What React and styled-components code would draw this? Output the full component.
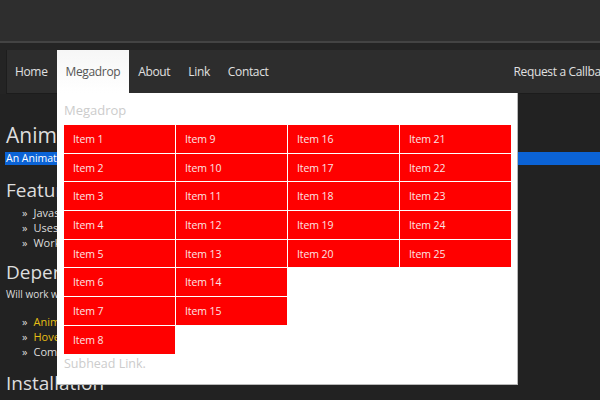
import React from 'react'
import styled, { createGlobalStyle } from 'styled-components'

const GlobalStyle = createGlobalStyle`
  html, body {
    margin: 0;
    padding: 0;
    background: #222222;
    overflow: hidden;
  }
  body {
    font-family: "Open Sans", "Liberation Sans", sans-serif;
  }
`

const Page = styled.div`
  position: relative;
  width: 600px;
  height: 400px;
  overflow: hidden;
  background: #222222;
`

const TopStrip = styled.div`
  height: 41px;
  background: #2e2e2e;
  border-bottom: 2px solid #434343;
`

const NavWrap = styled.div`
  padding: 7px 0 0 6px;
  background: #242424;
`

const NavBar = styled.nav`
  display: flex;
  align-items: stretch;
  height: 43px;
  width: 700px;
  background: #2d2d2d;
  border-left: 1px solid #1d1d1d;
  border-bottom: 1px solid #1c1c1c;
`

const NavItem = styled.a`
  display: flex;
  align-items: center;
  padding: 0 9px;
  font-size: 12px;
  letter-spacing: -0.35px;
  color: ${p => (p.$active ? '#555555' : '#e0e0e0')};
  background: ${p => (p.$active ? 'linear-gradient(#f6f6f6, #ffffff)' : 'transparent')};
  text-decoration: none;
  &:first-child {
    padding-left: 8px;
  }
`

const NavSpacer = styled.div`
  flex: 0 0 227px;
`

const Content = styled.main`
  padding: 28px 0 0 6px;
  color: #dddddd;
`

const Title = styled.h1`
  margin: 0;
  font-size: 21px;
  font-weight: 400;
  line-height: 26px;
  white-space: nowrap;
`

const Selected = styled.p`
  margin: 4px 0 0 -1px;
  padding-left: 1px;
  height: 13px;
  line-height: 13px;
  font-size: 10.5px;
  background: #0b63d6;
  color: #ffffff;
  white-space: nowrap;
`

const Heading = styled.h2`
  margin: ${p => p.$top}px 0 0;
  font-size: 19px;
  font-weight: 400;
  line-height: 24px;
  white-space: nowrap;
`

const List = styled.ul`
  list-style: none;
  margin: ${p => p.$top}px 0 0;
  padding: 0 0 0 16px;
`

const ListItem = styled.li`
  font-size: 11px;
  line-height: 15px;
  white-space: nowrap;
  color: ${p => (p.$link ? '#e6bf14' : '#dddddd')};
  &::before {
    content: '»';
    color: #dddddd;
    margin-right: 6px;
  }
`

const Note = styled.p`
  margin: 3px 0 0;
  font-size: 10px;
  line-height: 14px;
  white-space: nowrap;
`

const Dropdown = styled.div`
  position: absolute;
  left: 57px;
  top: 93px;
  width: 447px;
  height: 284px;
  padding: 0 6px 7px 7px;
  background: #ffffff;
  border-right: 1px solid #b9b9b9;
  border-bottom: 1px solid #b9b9b9;
`

const DropTitle = styled.div`
  height: 32px;
  line-height: 34px;
  font-size: 13px;
  color: #cccccc;
`

const Columns = styled.div`
  display: flex;
  gap: 1px;
`

const Column = styled.ul`
  display: flex;
  flex-direction: column;
  gap: 1px;
  width: 111px;
  margin: 0;
  padding: 0;
  list-style: none;
`

const Cell = styled.li`
  height: 27.7px;
  display: flex;
  align-items: center;
  padding-left: 9px;
  background: #ff0000;
  color: #fbe4e4;
  font-size: 10.5px;
  letter-spacing: -0.1px;
`

const Subhead = styled.a`
  display: block;
  margin-top: 1px;
  line-height: 18px;
  font-size: 12.5px;
  color: #cccccc;
  text-decoration: none;
`

const columns = [
  [1, 2, 3, 4, 5, 6, 7, 8],
  [9, 10, 11, 12, 13, 14, 15],
  [16, 17, 18, 19, 20],
  [21, 22, 23, 24, 25],
]

export default function App() {
  return (
    <Page>
      <GlobalStyle />
      <TopStrip />
      <NavWrap>
        <NavBar>
          <NavItem>Home</NavItem>
          <NavItem $active>Megadrop</NavItem>
          <NavItem>About</NavItem>
          <NavItem>Link</NavItem>
          <NavItem>Contact</NavItem>
          <NavSpacer />
          <NavItem>Request a Callback</NavItem>
        </NavBar>
      </NavWrap>

      <Content>
        <Title>Animated Megadrop</Title>
        <Selected>An Animated Megadrop Menu for Bootstrap</Selected>
        <Heading $top={13}>Features</Heading>
        <List $top={3}>
          <ListItem>Javascript free</ListItem>
          <ListItem>Uses CSS3 transitions</ListItem>
          <ListItem>Works on touch devices</ListItem>
        </List>
        <Heading $top={10}>Dependencies</Heading>
        <Note>Will work without them, but looks better with:</Note>
        <List $top={13}>
          <ListItem $link>Animate.css</ListItem>
          <ListItem $link>Hover.css</ListItem>
          <ListItem>Compatible with Bootstrap 3</ListItem>
        </List>
        <Heading $top={12}>Installation</Heading>
      </Content>

      <Dropdown>
        <DropTitle>Megadrop</DropTitle>
        <Columns>
          {columns.map((col, i) => (
            <Column key={i}>
              {col.map(n => (
                <Cell key={n}>Item {n}</Cell>
              ))}
            </Column>
          ))}
        </Columns>
        <Subhead>Subhead Link.</Subhead>
      </Dropdown>
    </Page>
  )
}
